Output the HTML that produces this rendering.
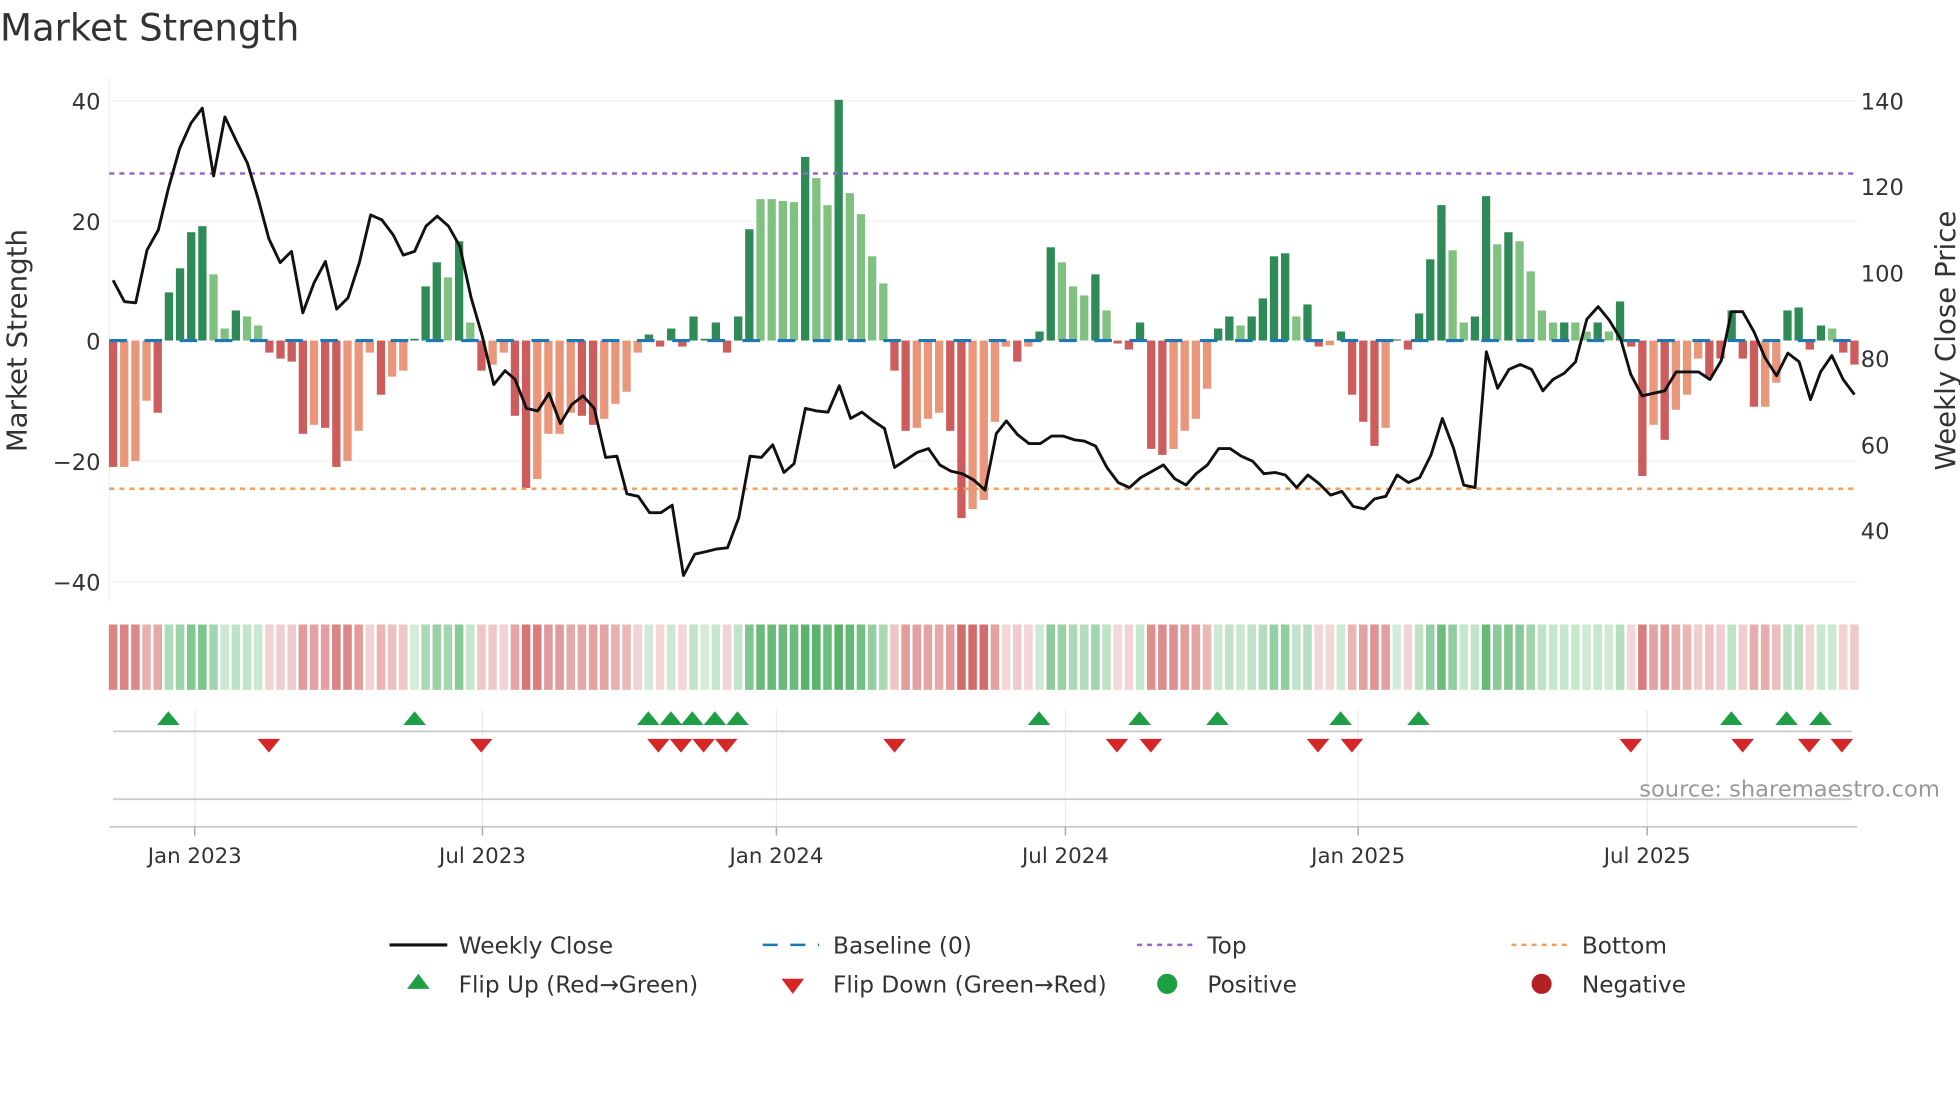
<!DOCTYPE html>
<html><head><meta charset="utf-8"><style>
html,body{margin:0;padding:0;background:#fff;}
svg{display:block;font-family:"DejaVu Sans","Liberation Sans",sans-serif;}
</style></head><body>
<svg id="s" width="1960" height="1102" viewBox="0 0 1560 877" xmlns="http://www.w3.org/2000/svg">
<rect width="1560" height="877" fill="#fff"/>
<text x="0" y="32" font-size="29.5" fill="#333">Market Strength</text>
<g stroke="#eef0f3" stroke-width="1">
<line x1="87" x2="1478" y1="80" y2="80"/><line x1="87" x2="1478" y1="176" y2="176"/>
<line x1="87" x2="1478" y1="367" y2="367"/><line x1="87" x2="1478" y1="463" y2="463"/>
<line x1="87" x2="87" y1="62" y2="478"/>
</g>
<g font-size="18" fill="#333" text-anchor="end">
<text x="80" y="87">40</text><text x="80" y="183">20</text><text x="80" y="278">0</text>
<text x="80" y="374">−20</text><text x="80" y="470">−40</text>
</g>
<g font-size="18" fill="#333">
<text x="1481" y="87">140</text><text x="1481" y="155">120</text><text x="1481" y="224">100</text>
<text x="1481" y="292">80</text><text x="1481" y="361">60</text><text x="1481" y="429">40</text>
</g>
<text transform="translate(21,271) rotate(-90)" font-size="22" fill="#333" text-anchor="middle">Market Strength</text>
<text transform="translate(1556,271) rotate(-90)" font-size="22" fill="#333" text-anchor="middle">Weekly Close Price</text>
<g id="bars"></g>
<line x1="87" x2="1478" y1="271" y2="271" stroke="#1f77b4" stroke-width="2.5" stroke-dasharray="14 14"/>
<line x1="87" x2="1478" y1="138" y2="138" stroke="#9467d0" stroke-width="2" stroke-dasharray="4 4"/>
<line x1="87" x2="1478" y1="389" y2="389" stroke="#f0a060" stroke-width="2" stroke-dasharray="4 4"/>
<polyline id="price" fill="none" stroke="#111" stroke-width="2.3" stroke-linejoin="round"/>
<g id="heat"></g>
<g stroke="#e8ebf0" stroke-width="1">
<line x1="155" x2="155" y1="565" y2="658"/><line x1="384" x2="384" y1="565" y2="658"/>
<line x1="618" x2="618" y1="565" y2="658"/><line x1="848" x2="848" y1="565" y2="658"/>
<line x1="1081" x2="1081" y1="565" y2="658"/><line x1="1311" x2="1311" y1="565" y2="658"/>
</g>
<line x1="90" x2="1474" y1="582" y2="582" stroke="#ccc" stroke-width="1.5"/>
<line x1="90" x2="1474" y1="636" y2="636" stroke="#ccc" stroke-width="1.5"/>
<line x1="87" x2="1478" y1="658" y2="658" stroke="#ccc" stroke-width="1.5"/>
<g stroke="#aaa" stroke-width="1.2">
<line x1="155" x2="155" y1="658" y2="665"/><line x1="384" x2="384" y1="658" y2="665"/>
<line x1="618" x2="618" y1="658" y2="665"/><line x1="848" x2="848" y1="658" y2="665"/>
<line x1="1081" x2="1081" y1="658" y2="665"/><line x1="1311" x2="1311" y1="658" y2="665"/>
</g>
<g id="marks"></g>
<text x="1544" y="634" font-size="18" fill="#999" text-anchor="end">source: sharemaestro.com</text>
<g font-size="17" fill="#333" text-anchor="middle">
<text x="155" y="687">Jan 2023</text><text x="384" y="687">Jul 2023</text><text x="618" y="687">Jan 2024</text>
<text x="848" y="687">Jul 2024</text><text x="1081" y="687">Jan 2025</text><text x="1311" y="687">Jul 2025</text>
</g>
<g font-size="18.5" fill="#333">
<line x1="310" x2="356" y1="752" y2="752" stroke="#111" stroke-width="2.5"/>
<text x="365" y="759">Weekly Close</text>
<line x1="607" x2="652" y1="752" y2="752" stroke="#1f77b4" stroke-width="2" stroke-dasharray="12 10"/>
<text x="663" y="759">Baseline (0)</text>
<line x1="905" x2="950" y1="752" y2="752" stroke="#9467d0" stroke-width="2" stroke-dasharray="4 4"/>
<text x="961" y="759">Top</text>
<line x1="1203" x2="1248" y1="752" y2="752" stroke="#f0a060" stroke-width="2" stroke-dasharray="4 4"/>
<text x="1259" y="759">Bottom</text>
<polygon points="324,787 342,787 333,775" fill="#1e9e45"/>
<text x="365" y="790">Flip Up (Red→Green)</text>
<polygon points="622,779 640,779 631,791" fill="#d62728"/>
<text x="663" y="790">Flip Down (Green→Red)</text>
<circle cx="929" cy="783" r="8" fill="#1e9e45"/>
<text x="961" y="790">Positive</text>
<circle cx="1227" cy="783" r="8" fill="#b22222"/>
<text x="1259" y="790">Negative</text>
</g>
</svg>
<script>
var NS="http://www.w3.org/2000/svg";
var B=[[-21,'r'],[-21,'o'],[-20,'o'],[-10,'o'],[-12,'r'],[8,'d'],[12,'d'],[18,'d'],[19,'d'],[11,'l'],[2,'l'],[5,'d'],[4,'l'],[2.5,'l'],[-2,'r'],[-3,'r'],[-3.5,'r'],[-15.5,'r'],[-14,'o'],[-14.5,'r'],[-21,'r'],[-20,'o'],[-15,'o'],[-2,'o'],[-9,'r'],[-6,'o'],[-5,'o'],[0.3,'d'],[9,'d'],[13,'d'],[10.5,'l'],[16.5,'d'],[3,'l'],[-5,'r'],[-4,'o'],[-2,'o'],[-12.5,'r'],[-24.5,'r'],[-23,'o'],[-15.5,'o'],[-15.5,'o'],[-12,'o'],[-12.5,'r'],[-14,'r'],[-13,'o'],[-10.5,'o'],[-8.5,'o'],[-2,'o'],[1,'d'],[-1,'r'],[2,'d'],[-1,'r'],[4,'d'],[0.3,'d'],[3,'d'],[-2,'r'],[4,'d'],[18.5,'d'],[23.5,'l'],[23.5,'l'],[23.2,'l'],[23,'l'],[30.5,'d'],[27,'l'],[22.5,'l'],[40,'d'],[24.5,'l'],[21,'l'],[14,'l'],[9.5,'l'],[-5,'r'],[-15,'r'],[-14.5,'o'],[-13,'o'],[-12,'o'],[-15,'r'],[-29.5,'r'],[-28,'o'],[-26.5,'o'],[-13.5,'o'],[-1,'o'],[-3.5,'r'],[-1,'o'],[1.5,'d'],[15.5,'d'],[13,'l'],[9,'l'],[7.5,'l'],[11,'d'],[5,'l'],[-0.5,'r'],[-1.5,'r'],[3,'d'],[-18,'r'],[-19,'r'],[-18,'o'],[-15,'o'],[-13,'o'],[-8,'o'],[2,'d'],[4,'d'],[2.5,'l'],[4,'d'],[7,'d'],[14,'d'],[14.5,'d'],[4,'l'],[6,'d'],[-1,'r'],[-0.8,'o'],[1.5,'d'],[-9,'r'],[-13.5,'r'],[-17.5,'r'],[-14.5,'o'],[0.2,'d'],[-1.5,'r'],[4.5,'d'],[13.5,'d'],[22.5,'d'],[15,'l'],[3,'l'],[4,'d'],[24,'d'],[16,'l'],[18,'d'],[16.5,'l'],[11.5,'l'],[5,'l'],[3,'l'],[3,'d'],[3,'l'],[1.5,'l'],[3,'d'],[1.5,'l'],[6.5,'d'],[-1,'r'],[-22.5,'r'],[-14,'o'],[-16.5,'r'],[-11.5,'o'],[-9,'o'],[-3,'o'],[-6,'r'],[-3,'r'],[5,'d'],[-3,'r'],[-11,'r'],[-11,'o'],[-7,'o'],[5,'d'],[5.5,'d'],[-1.5,'r'],[2.5,'d'],[2,'l'],[-2,'r'],[-4,'r']];
var C={d:'#2e8b57',l:'#80c080',r:'#cd5c5c',o:'#e9967a'};
var g=document.getElementById('bars'),h=document.getElementById('heat');
var step=(1476-90)/(B.length-1);
function R(p,a){var e=document.createElementNS(NS,'rect');for(var k in a)e.setAttribute(k,a[k]);p.appendChild(e);}
B.forEach(function(b,i){var x=90+step*i,v=b[0],y0=271,y1=271-v*4.79;
R(g,{x:x-3.3,y:Math.min(y0,y1),width:6.6,height:Math.max(Math.abs(y1-y0),1),fill:C[b[1]]});
var a=Math.min(0.8,0.2+Math.abs(v)/45);
R(h,{x:x-3.4,y:497,width:6.8,height:52,fill:v>=0?'rgba(46,160,70,'+a+')':'rgba(200,70,70,'+a+')'});});
var P=[[90,223],[99,240],[108,241],[117,199],[126,183],[134,150],[143,118],[152,98],[161,86],[170,140],[179,93],[188,112],[197,130],[206,160],[214,190],[223,209],[232,200],[241,249],[250,225],[259,208],[268,246],[277,237],[286,209],[295,171],[304,175],[313,187],[321,203],[330,200],[339,180],[348,172],[357,180],[366,196],[375,237],[384,268],[393,306],[402,295],[410,302],[419,325],[428,327],[437,313],[446,337],[455,322],[464,315],[473,325],[482,364],[491,363],[499,393],[508,395],[517,408],[526,408],[535,402],[544,458],[553,441],[562,439],[570,437],[579,436],[588,412],[597,363],[606,364],[615,354],[624,376],[632,369],[641,325],[650,327],[659,328],[668,307],[677,333],[686,328],[695,335],[704,341],[712,372],[721,366],[730,360],[739,357],[748,370],[757,375],[766,377],[775,382],[784,390],[793,345],[801,335],[810,346],[819,353],[828,353],[837,347],[846,347],[855,350],[863,351],[872,355],[881,372],[890,384],[899,388],[908,380],[917,375],[926,370],[935,381],[944,386],[952,377],[961,370],[970,357],[979,357],[988,363],[997,367],[1006,377],[1015,376],[1023,378],[1032,388],[1041,378],[1050,385],[1059,394],[1068,391],[1077,403],[1086,405],[1094,397],[1103,395],[1112,378],[1121,384],[1130,380],[1139,362],[1148,333],[1157,357],[1165,386],[1174,388],[1183,280],[1192,309],[1201,294],[1210,290],[1219,294],[1228,311],[1236,302],[1245,297],[1254,288],[1263,254],[1272,244],[1281,255],[1290,270],[1298,298],[1307,315],[1316,313],[1325,311],[1334,296],[1343,296],[1352,296],[1361,302],[1370,287],[1378,248],[1387,248],[1396,264],[1405,285],[1414,299],[1423,281],[1432,288],[1441,318],[1449,296],[1458,283],[1467,302],[1476,314]];
document.getElementById('price').setAttribute('points',P.map(function(p){return p.join(',')}).join(' '));
var m=document.getElementById('marks');
function T(pts,f){var e=document.createElementNS(NS,'polygon');e.setAttribute('points',pts);e.setAttribute('fill',f);m.appendChild(e);}
[134,330,516,534,551,569,587,827,907,969,1067,1129,1378,1422,1449].forEach(function(x){T((x-9)+',577 '+(x+9)+',577 '+x+',566','#1e9e45');});
[214,383,524,542,560,578,712,889,916,1049,1076,1298,1387,1440,1466].forEach(function(x){T((x-9)+',588 '+(x+9)+',588 '+x+',599','#d62728');});
</script>
</body></html>
